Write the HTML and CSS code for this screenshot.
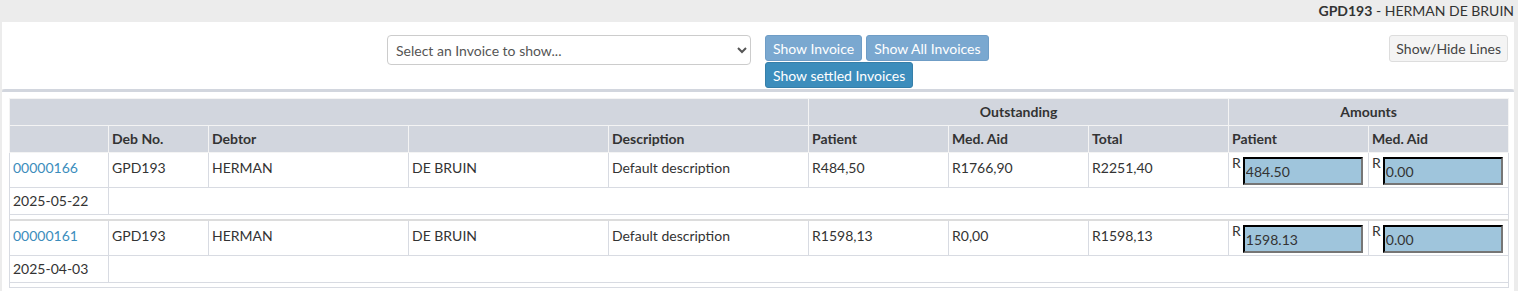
FILE: index.html
```html
<!DOCTYPE html>
<html lang="en">
<head>
    <meta charset="UTF-8">
    <title>Invoices</title>
    <link rel="stylesheet" href="styles.css">
</head>
<body>
    <div class="topbar"><b>GPD193</b> - HERMAN DE BRUIN</div>

    <div class="page">
        <div class="box filters">
            <div class="col"></div>
            <div class="col">
                <select class="invoice-select">
                    <option>Select an Invoice to show...</option>
                </select>
            </div>
            <div class="col">
                <div class="btn-row">
                    <button class="btn btn-primary" disabled>Show Invoice</button>
                    <button class="btn btn-primary" disabled>Show All Invoices</button>
                    <button class="btn btn-info">Show settled Invoices</button>
                </div>
            </div>
            <div class="col col-right">
                <button class="btn btn-default">Show/Hide Lines</button>
            </div>
        </div>

        <div class="box box-table">
            <table class="invoices">
                <colgroup>
                    <col style="width: 99px">
                    <col style="width: 100px">
                    <col style="width: 200px">
                    <col style="width: 200px">
                    <col style="width: 200px">
                    <col style="width: 140px">
                    <col style="width: 140px">
                    <col style="width: 140px">
                    <col style="width: 140px">
                    <col style="width: 140px">
                </colgroup>
                <thead>
                    <tr>
                        <th colspan="5"></th>
                        <th colspan="3" class="center">Outstanding</th>
                        <th colspan="2" class="center">Amounts</th>
                    </tr>
                    <tr>
                        <th></th>
                        <th>Deb No.</th>
                        <th>Debtor</th>
                        <th></th>
                        <th>Description</th>
                        <th>Patient</th>
                        <th>Med. Aid</th>
                        <th>Total</th>
                        <th>Patient</th>
                        <th>Med. Aid</th>
                    </tr>
                </thead>
                <tbody>
                    <tr class="main-row">
                        <td><a href="#">00000166</a></td>
                        <td>GPD193</td>
                        <td>HERMAN</td>
                        <td>DE BRUIN</td>
                        <td>Default description</td>
                        <td>R484,50</td>
                        <td>R1766,90</td>
                        <td>R2251,40</td>
                        <td class="amount"><span>R</span><input type="text" value="484.50"></td>
                        <td class="amount"><span>R</span><input type="text" value="0.00"></td>
                    </tr>
                    <tr>
                        <td>2025-05-22</td>
                        <td colspan="9"></td>
                    </tr>
                    <tr class="lines-row">
                        <td colspan="10"></td>
                    </tr>
                </tbody>
                <tbody>
                    <tr class="main-row">
                        <td><a href="#">00000161</a></td>
                        <td>GPD193</td>
                        <td>HERMAN</td>
                        <td>DE BRUIN</td>
                        <td>Default description</td>
                        <td>R1598,13</td>
                        <td>R0,00</td>
                        <td>R1598,13</td>
                        <td class="amount"><span>R</span><input type="text" value="1598.13"></td>
                        <td class="amount"><span>R</span><input type="text" value="0.00"></td>
                    </tr>
                    <tr>
                        <td>2025-04-03</td>
                        <td colspan="9"></td>
                    </tr>
                    <tr class="lines-row">
                        <td colspan="10"></td>
                    </tr>
                </tbody>
            </table>
        </div>
    </div>
</body>
</html>
```

FILE: styles.css
```css
body { margin: 0; background: #ececec; font-family: Lato, "Liberation Sans", sans-serif; font-size: 14px; color: #333; }

.topbar { height: 22px; line-height: 22px; text-align: right; padding-right: 4px; }

.page { padding: 0 4px 0 2px; }
.box { background: #fff; }

.filters { display: flex; padding: 13px 0 1px; }
.col { width: 25%; padding: 0 7px; box-sizing: border-box; }
.col-right { display: flex; justify-content: flex-end; padding-right: 6px; }

.invoice-select { width: 100%; height: 30px; padding: 0 4px; border: 1px solid #ccc; border-radius: 4px; background: #fff; color: #555; font: inherit; }

.btn-row { display: flex; flex-wrap: wrap; gap: 1px 4px; }
.btn { font: inherit; height: 26px; padding: 0 7px; border-radius: 3px; border: 1px solid transparent; cursor: pointer; }
.btn-primary { background: #7aa8d0; border-color: #6f9dc6; color: #fff; }
.btn-info { background: #3c8dbc; border-color: #367fa9; color: #fff; }
.btn-default { background: #f4f4f4; border-color: #ddd; color: #444; height: 27px; padding: 0 6px; }

.box-table { border-top: 3px solid #d2d6de; border-radius: 3px; padding: 6px 6px 10px 7px; }

.invoices { border-collapse: collapse; table-layout: fixed; width: 1499px; }
.invoices th, .invoices td { padding: 4px 3px; text-align: left; vertical-align: middle; line-height: 18px; }
.invoices th { background: #d2d6de; border: 1px solid #f4f4f4; font-weight: bold; }
.invoices th.center { text-align: center; }
.invoices td { border: 1px solid #d8dbe2; }
.invoices tbody + tbody { border-top: 2px solid #dcdcdc; }
.invoices a { color: #3c8dbc; text-decoration: none; }

.invoices .main-row td { vertical-align: top; padding: 6px 3px 2px; }
.invoices .main-row td.amount { padding-top: 4px; }
.lines-row td { padding: 2px; height: 0; line-height: 0; }

.amount { white-space: nowrap; }
.amount span { display: inline-block; vertical-align: top; margin-right: 2px; line-height: 11px; }
.amount input { width: 120px; height: 28px; box-sizing: border-box; border: 2px inset #767676; border-top-color: #222; border-left-color: #222; background: #9fc5dc; font: inherit; color: #333; padding: 0 1px; vertical-align: top; }
```
